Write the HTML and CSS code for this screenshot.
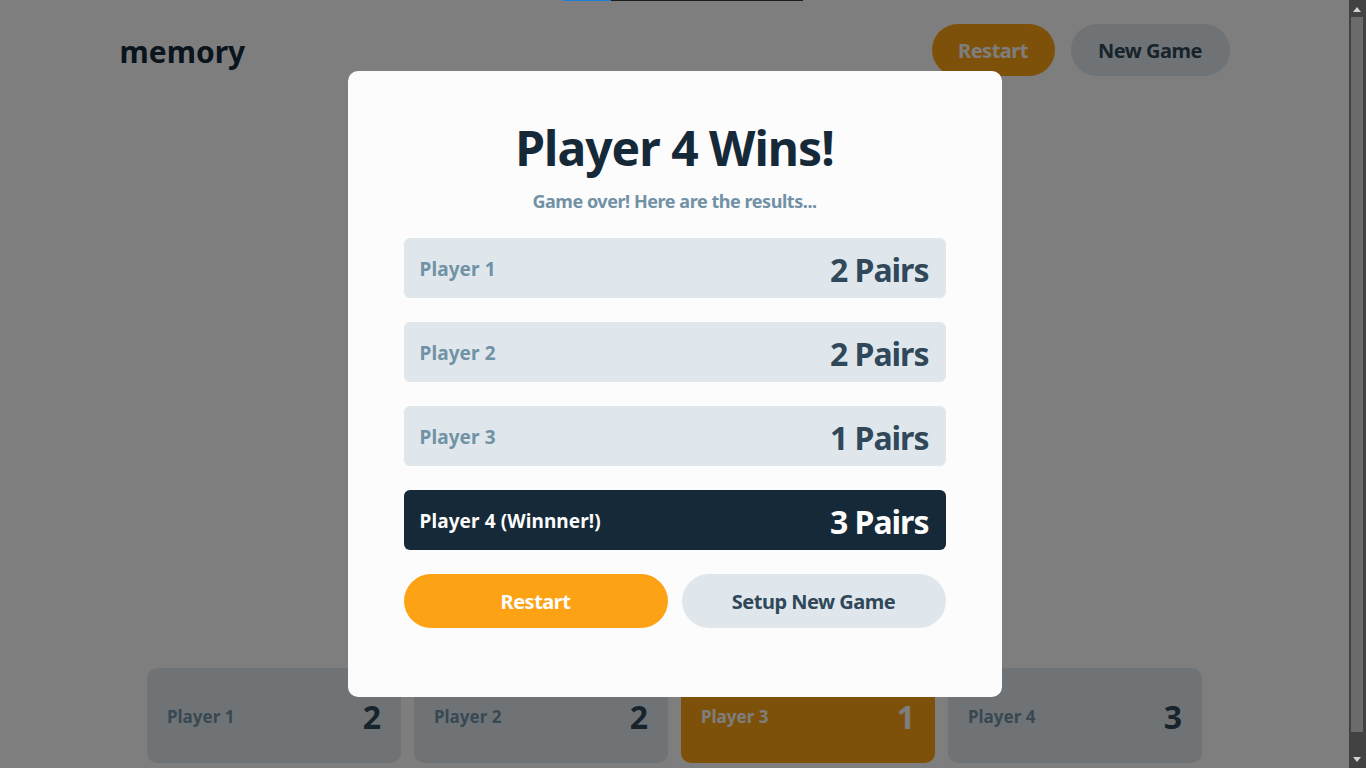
FILE: index.html
```html
<!DOCTYPE html>
<html lang="en">
<head>
<meta charset="utf-8">
<title>memory</title>
<link rel="stylesheet" href="styles.css">
</head>
<body>
<div class="topline"><span class="topline-fill"></span></div>
<div class="page">
  <header class="header">
    <h1 class="logo">memory</h1>
    <div class="header-actions">
      <button class="btn btn-primary">Restart</button>
      <button class="btn btn-secondary">New Game</button>
    </div>
  </header>
  <main class="board"></main>
  <footer class="players">
    <div class="player"><span class="player-name">Player 1</span><span class="player-score">2</span></div>
    <div class="player"><span class="player-name">Player 2</span><span class="player-score">2</span></div>
    <div class="player player-active"><span class="player-name">Player 3</span><span class="player-score">1</span></div>
    <div class="player"><span class="player-name">Player 4</span><span class="player-score">3</span></div>
  </footer>
</div>
<div class="overlay">
  <div class="modal">
    <h2 class="modal-title">Player 4 Wins!</h2>
    <p class="modal-sub">Game over! Here are the results...</p>
    <ul class="results">
      <li class="result"><span class="result-name">Player 1</span><span class="result-value">2 Pairs</span></li>
      <li class="result"><span class="result-name">Player 2</span><span class="result-value">2 Pairs</span></li>
      <li class="result"><span class="result-name">Player 3</span><span class="result-value">1 Pairs</span></li>
      <li class="result result-winner"><span class="result-name">Player 4 (Winnner!)</span><span class="result-value">3 Pairs</span></li>
    </ul>
    <div class="modal-actions">
      <button class="mbtn mbtn-primary">Restart</button>
      <button class="mbtn mbtn-secondary">Setup New Game</button>
    </div>
  </div>
</div>
<div class="scrollbar" aria-hidden="true">
  <span class="sb-arrow sb-up"></span>
  <span class="sb-thumb"></span>
  <span class="sb-arrow sb-down"></span>
</div>
</body>
</html>
```
FILE: styles.css
```css
html {
  background: #fcfcfc;
  overflow: hidden;
}
body {
  margin: 0 17px 0 0;
  background: #fcfcfc;
  color: #152938;
  font-family: "Noto Sans", "Open Sans", sans-serif;
}
.topline {
  position: fixed;
  top: 0;
  left: 563px;
  width: 240px;
  height: 1px;
  background: #1e1e1e;
  z-index: 20;
  display: flex;
}
.topline-fill {
  width: 48px;
  background: #1a80d8;
}
.page {
  width: 1110px;
  margin: 0 auto;
  padding: 24px 0 5px;
  height: 768px;
  box-sizing: border-box;
  display: flex;
  flex-direction: column;
}
.header {
  display: flex;
  align-items: center;
  justify-content: space-between;
}
.logo {
  margin: 0;
  padding-top: 3px;
  font-size: 30px;
  font-weight: 700;
  color: #152938;
}
.header-actions {
  display: flex;
  gap: 16px;
}
.btn {
  border: 0;
  height: 52px;
  border-radius: 26px;
  font-family: inherit;
  font-size: 20px;
  font-weight: 700;
  letter-spacing: -0.5px;
  padding: 0;
}
.btn-primary {
  width: 123px;
  background: #fda214;
  color: #fcfcfc;
}
.btn-secondary {
  width: 159px;
  background: #dfe7ec;
  color: #304859;
}
.board {
  flex: 1;
}
.players {
  width: 1055px;
  margin: 0 auto;
  display: grid;
  grid-template-columns: repeat(4, 1fr);
  gap: 13px;
}
.player {
  height: 95px;
  border-radius: 10px;
  background: #dfe7ec;
  display: flex;
  align-items: center;
  justify-content: space-between;
  padding: 2px 20px 0;
  box-sizing: border-box;
}
.player-name {
  font-size: 17px;
  font-weight: 700;
  color: #7191a5;
}
.player-score {
  font-size: 32px;
  font-weight: 700;
  color: #304859;
}
.player-active {
  background: #fda214;
}
.player-active .player-name,
.player-active .player-score {
  color: #fcfcfc;
}
.overlay {
  position: fixed;
  top: 0;
  left: 0;
  right: 17px;
  bottom: 0;
  background: rgba(0, 0, 0, 0.5);
  display: flex;
  align-items: center;
  justify-content: center;
  z-index: 10;
}
.modal {
  width: 654px;
  box-sizing: border-box;
  background: #fcfcfc;
  border-radius: 10px;
  padding: 47px 56px 69px;
  display: flex;
  flex-direction: column;
}
.modal-title {
  margin: 0;
  font-size: 48px;
  line-height: 60px;
  font-weight: 700;
  letter-spacing: -1px;
  text-align: center;
  color: #152938;
}
.modal-sub {
  margin: 11px 0 0;
  font-size: 18px;
  line-height: 24px;
  font-weight: 700;
  letter-spacing: -0.45px;
  text-align: center;
  color: #7191a5;
}
.results {
  list-style: none;
  margin: 25px 0 0;
  padding: 0;
  display: flex;
  flex-direction: column;
  gap: 24px;
}
.result {
  height: 60px;
  box-sizing: border-box;
  border-radius: 6px;
  background: #dfe7ec;
  display: flex;
  align-items: center;
  justify-content: space-between;
  padding: 2px 17px 0 16px;
}
.result-name {
  font-size: 19px;
  font-weight: 700;
  letter-spacing: 0.1px;
  color: #7191a5;
}
.result-value {
  font-size: 32px;
  font-weight: 700;
  letter-spacing: -1px;
  color: #304859;
}
.result-winner {
  background: #152938;
}
.result-winner .result-name,
.result-winner .result-value {
  color: #fcfcfc;
}
.modal-actions {
  margin-top: 24px;
  display: grid;
  grid-template-columns: 1fr 1fr;
  gap: 14px;
}
.mbtn {
  height: 54px;
  border: 0;
  border-radius: 27px;
  font-family: inherit;
  font-size: 20px;
  font-weight: 700;
  letter-spacing: -0.5px;
  padding-bottom: 1px;
}
.mbtn-primary {
  background: #fda214;
  color: #fcfcfc;
}
.mbtn-secondary {
  background: #dfe7ec;
  color: #304859;
}
.scrollbar {
  position: fixed;
  top: 0;
  right: 0;
  width: 17px;
  height: 100%;
  background: #424242;
  z-index: 30;
}
.sb-thumb {
  position: absolute;
  top: 17px;
  left: 2px;
  width: 12px;
  height: 715px;
  background: #6b6b6b;
}
.sb-arrow {
  position: absolute;
  left: 4px;
  width: 0;
  height: 0;
  border-left: 4.5px solid transparent;
  border-right: 4.5px solid transparent;
}
.sb-up {
  top: 7px;
  border-bottom: 5px solid #d2d2d2;
}
.sb-down {
  bottom: 6px;
  border-top: 5px solid #d2d2d2;
}
```
